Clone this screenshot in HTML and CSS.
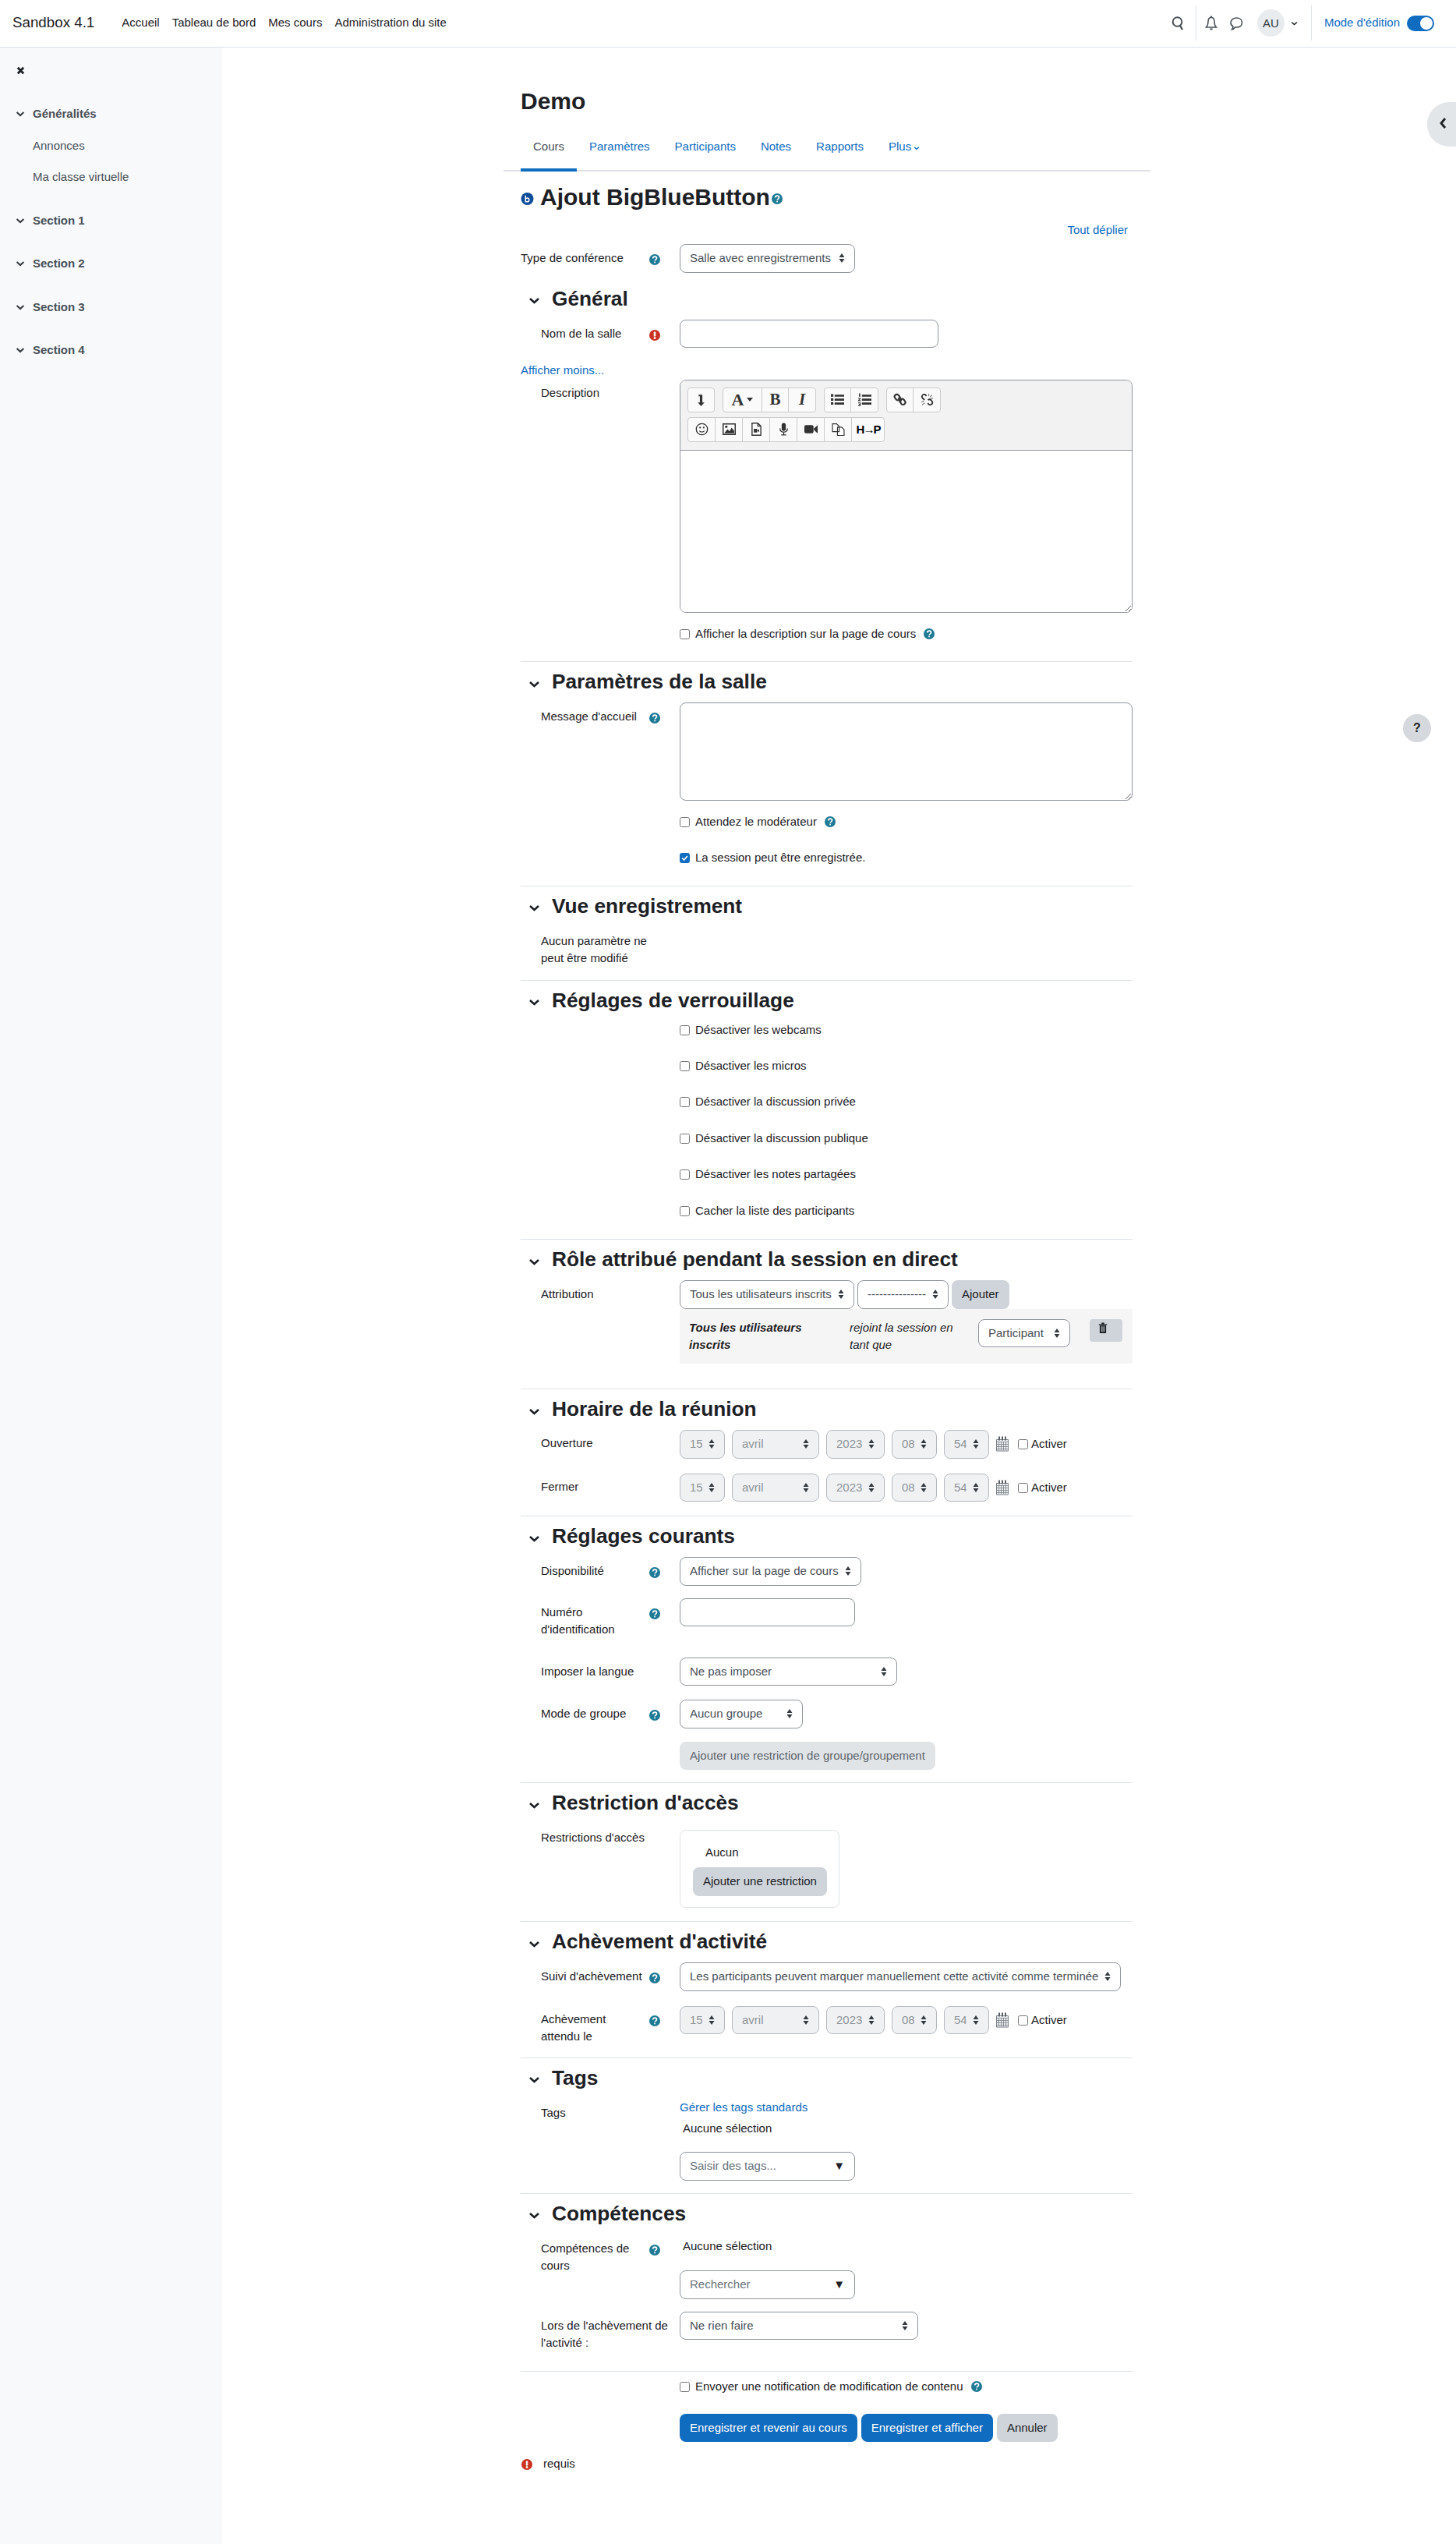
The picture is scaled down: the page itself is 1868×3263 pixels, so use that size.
FILE: index.html
```html
<!DOCTYPE html>
<html lang="fr">
<head>
    <meta charset="UTF-8">
    <meta name="viewport" content="width=device-width, initial-scale=1.0">
    <title>Ajout BigBlueButton</title>
    <link rel="stylesheet" href="styles.css">
</head>
<body>
    <svg class="defs" width="0" height="0">
        <symbol id="help" viewBox="0 0 14 14">
            <circle cx="7" cy="7" r="7" fill="#1f7a96"/>
            <path d="M4.6 5.5C4.7 3.9 5.7 3.1 7.1 3.1c1.5 0 2.4.9 2.4 2 0 1-.6 1.5-1.3 2-.6.4-.9.7-.9 1.4" fill="none" stroke="#fff" stroke-width="1.7"/>
            <rect x="6.2" y="9.6" width="1.7" height="1.7" fill="#fff"/>
        </symbol>
        <symbol id="req" viewBox="0 0 14 14">
            <circle cx="7" cy="7" r="7" fill="#ca3120"/>
            <rect x="5.7" y="2.4" width="2.6" height="6" rx=".6" fill="#fff"/>
            <rect x="5.7" y="9.3" width="2.6" height="2.4" rx=".5" fill="#fff"/>
        </symbol>
        <symbol id="chev" viewBox="0 0 15 9">
            <path d="M2 2l5.5 5L13 2" fill="none" stroke="currentColor" stroke-width="2.6"/>
        </symbol>
        <symbol id="cal" viewBox="0 0 16 20">
            <path d="M0 4h16v15.500H0z" fill="#eceef0"/>
            <path d="M1 7.500h14M1 10.500h14M1 13.500h14M1 16.500h14M3.500 7v11M6.500 7v11M9.500 7v11M12.500 7v11" stroke="#7a8087" stroke-width=".8" fill="none"/>
            <path d="M.5 4.500h15v14.500H.5z" fill="none" stroke="#7a8087"/>
            <path d="M3 .5h2v5H3zM7 .5h2v5H7zM11 .5h2v5h-2z" fill="#5a6067"/>
        </symbol>
    </svg>

    <header class="navbar">
        <a class="brand">Sandbox 4.1</a>
        <nav class="mainnav">
            <a>Accueil</a>
            <a>Tableau de bord</a>
            <a>Mes cours</a>
            <a>Administration du site</a>
        </nav>
        <div class="usernav">
            <svg class="nav-icon" viewBox="0 0 16 20"><circle cx="7.500" cy="8" r="5.800" fill="none" stroke="#495057" stroke-width="2"/><path d="M11 13l3 5" stroke="#495057" stroke-width="2.400"/></svg>
            <span class="nav-sep"></span>
            <svg class="nav-icon bell" viewBox="0 0 16 20"><path d="M8 2.500c-3 0-4 2-4 5 0 3.500-.6 5.500-2.500 7.500h13c-1.900-2-2.500-4-2.500-7.500 0-3-1-5-4-5z" fill="none" stroke="#495057" stroke-width="1.500"/><path d="M6 16.500a2 2 0 0 0 4 0zM7 .5h2v2.500H7z" fill="#495057"/></svg>
            <svg class="nav-icon chat" viewBox="0 0 18 20"><path d="M9.500 3c4 0 7 2.400 7 6s-3 6-7 6c-.6 0-1 0-1.500-.1-1.200 1.300-2.600 2.400-4.500 2.800.9-1.200 1.400-2.300 1.500-3.700C3 12.800 2 11 2 9c0-3.600 3.500-6 7.500-6z" fill="none" stroke="#495057" stroke-width="1.600"/></svg>
            <span class="avatar">AU</span>
            <svg class="nav-chev"><use href="#chev"/></svg>
            <span class="nav-sep sep-2"></span>
            <a class="edit-label">Mode d'édition</a>
            <span class="toggle"><span class="knob"></span></span>
        </div>
    </header>

    <div class="page">
        <aside class="drawer">
            <svg class="close-x" viewBox="0 0 12 12"><path d="M2 2l8 8M10 2l-8 8" stroke="#1d2125" stroke-width="3.200"/></svg>
            <div class="sec sec-first"><svg class="sec-chev"><use href="#chev"/></svg>Généralités</div>
            <a class="act act-first">Annonces</a>
            <a class="act">Ma classe virtuelle</a>
            <div class="sec sec-next"><svg class="sec-chev"><use href="#chev"/></svg>Section 1</div>
            <div class="sec"><svg class="sec-chev"><use href="#chev"/></svg>Section 2</div>
            <div class="sec"><svg class="sec-chev"><use href="#chev"/></svg>Section 3</div>
            <div class="sec"><svg class="sec-chev"><use href="#chev"/></svg>Section 4</div>
        </aside>

        <main class="region">
            <h1 class="course-title">Demo</h1>
            <nav class="tabs">
                <a class="tab active">Cours</a>
                <a class="tab">Paramètres</a>
                <a class="tab">Participants</a>
                <a class="tab">Notes</a>
                <a class="tab">Rapports</a>
                <a class="tab">Plus<svg class="plus-chev"><use href="#chev"/></svg></a>
            </nav>

            <div class="content">
                <h2 class="page-title">
                    <svg class="mod-icon" viewBox="0 0 16 16"><circle cx="8" cy="8" r="8" fill="#0f4d9a"/><path d="M5.800 3.800v8h1.700M5.800 8.200c.6-.9 1.400-1.200 2.200-1.200 1.300 0 2.300 1 2.300 2.400S9.300 11.800 8 11.800c-.9 0-1.700-.4-2.200-1.200" fill="none" stroke="#fff" stroke-width="1.500"/></svg>
                    Ajout BigBlueButton
                    <svg class="help title-help"><use href="#help"/></svg>
                </h2>
                <div class="expand-all"><a>Tout déplier</a></div>

                <div class="row">
                    <div class="lab lab-flat"><span>Type de conférence</span><span class="addon"><svg class="help"><use href="#help"/></svg></span></div>
                    <select class="w-225"><option>Salle avec enregistrements</option></select>
                </div>

                <section class="block block-first">
                    <h3 class="hd"><svg class="hd-chev"><use href="#chev"/></svg>Général</h3>
                    <div class="row row-name">
                        <div class="lab"><span>Nom de la salle</span><span class="addon"><svg class="help"><use href="#req"/></svg></span></div>
                        <input class="text w-332" type="text">
                    </div>
                    <a class="show-less">Afficher moins...</a>
                    <div class="row">
                        <div class="lab lab-date"><span>Description</span></div>
                        <div class="editor">
                            <div class="toolbar">
                                <div class="tool-row">
                                    <div class="tool-group tool-single"><button class="tool"><svg viewBox="0 0 16 16" class="ti"><path d="M5 2h4.500v9.500H12L8 16l-4-4.500h2.500V4H5z" fill="#333"/></svg></button></div>
                                    <div class="tool-group">
                                        <button class="tool tool-font">A<span class="caret"></span></button>
                                        <button class="tool tool-b">B</button>
                                        <button class="tool tool-i">I</button>
                                    </div>
                                    <div class="tool-group">
                                        <button class="tool"><svg viewBox="0 0 16 16" class="ti"><path d="M4.500 2h11.500v2.500H4.500zM4.500 6.800h11.500v2.500H4.500zM4.500 11.500h11.500v2.500H4.500zM0 1.500h3v3H0zM0 6.500h3v3H0zM0 11.200h3v3H0z" fill="#333"/></svg></button>
                                        <button class="tool"><svg viewBox="0 0 16 16" class="ti"><path d="M4.500 2h11.500v2.500H4.500zM4.500 6.800h11.500v2.500H4.500zM4.500 11.500h11.500v2.500H4.500zM1 .5h1.500v4H1zM0 6h3v1.200L1.300 8.800H3v1H0V8.700L1.700 7H0zM0 11.500h3v4.200H0v-1h2V14H1v-.8h1v-.7H0z" fill="#333"/></svg></button>
                                    </div>
                                    <div class="tool-group">
                                        <button class="tool"><svg viewBox="0 0 16 16" class="ti"><path d="M2.500 2.500a2.600 2.600 0 0 1 3.700 0l1.600 2a2.600 2.600 0 0 1-.4 3.500 2.600 2.600 0 0 1-3.700 0l-1.600-2a2.600 2.600 0 0 1 .4-3.500zM9 8a2.600 2.600 0 0 1 3.700 0l1.300 1.700a2.600 2.600 0 0 1-.4 3.600 2.600 2.600 0 0 1-3.700 0l-1.300-1.800A2.600 2.600 0 0 1 9 8zM6 6l4 4" fill="none" stroke="#333" stroke-width="2"/></svg></button>
                                        <button class="tool"><svg viewBox="0 0 16 16" class="ti"><path d="M2.500 2.500a2.600 2.600 0 0 1 3.700 0l.9 1.200M4.800 8.500L2.800 6.500a2.600 2.600 0 0 1-.4-3.800M9 8.500a2.600 2.600 0 0 1 3.700 0l1.100 1.600a2.600 2.600 0 0 1-.4 3.500 2.600 2.600 0 0 1-3.700 0l-.9-1.200" fill="none" stroke="#333" stroke-width="1.800"/><path d="M10 1v3M14 2.500l-2.500 2.500M15 6.500h-3M1 11l3-1M2 14.500l3-2.500" stroke="#777" stroke-width="1"/></svg></button>
                                    </div>
                                </div>
                                <div class="tool-row">
                                    <div class="tool-group">
                                        <button class="tool"><svg viewBox="0 0 16 16" class="ti"><circle cx="8" cy="8" r="6.800" fill="none" stroke="#333" stroke-width="1.200"/><circle cx="5.800" cy="6" r="1" fill="#333"/><circle cx="10.200" cy="6" r="1" fill="#333"/><path d="M5 10c1.600 1.800 4.400 1.800 6 0" fill="none" stroke="#333" stroke-width="1.200"/></svg></button>
                                        <button class="tool"><svg viewBox="0 0 16 16" class="ti"><path d="M.7 1.700h14.600v12.600H.7z" fill="none" stroke="#333" stroke-width="1.400"/><path d="M2 13l4-5 2.500 2.500L11 6l3 4v3z" fill="#333"/><circle cx="4.500" cy="5" r="1.500" fill="#333"/></svg></button>
                                        <button class="tool"><svg viewBox="0 0 16 16" class="ti"><path d="M2.700.7h7l3.600 3.600v11H2.700zM9.700.7v3.600h3.600" fill="none" stroke="#333" stroke-width="1.300"/><path d="M4.800 7.500h4v4.500h-4zM9 9.500l2.200-1.500v3.500L9 10.200z" fill="#333"/></svg></button>
                                        <button class="tool"><svg viewBox="0 0 16 16" class="ti"><rect x="5.500" y=".5" width="5" height="9.500" rx="2.500" fill="#333"/><path d="M3.500 7c0 3 2 4.500 4.500 4.500S12.500 10 12.500 7M8 11.500V15M5 15h6" fill="none" stroke="#333" stroke-width="1.200"/></svg></button>
                                        <button class="tool"><svg viewBox="0 0 16 16" class="ti"><rect x="0" y="3" width="11" height="10" rx="2" fill="#333"/><path d="M11.500 7L16 3v10l-4.500-4z" fill="#333"/></svg></button>
                                        <button class="tool"><svg viewBox="0 0 16 16" class="ti"><path d="M1 1.500h5l3 3V11H1zM7 5.500h5l3 3v7H7z" fill="#fff" stroke="#333" stroke-width="1.100"/></svg></button>
                                        <button class="tool tool-h5p">H→P</button>
                                    </div>
                                </div>
                            </div>
                            <textarea class="editor-body"></textarea>
                        </div>
                    </div>
                    <label class="check-row"><input type="checkbox">Afficher la description sur la page de cours<svg class="help check-help"><use href="#help"/></svg></label>
                </section>

                <section class="block">
                    <h3 class="hd"><svg class="hd-chev"><use href="#chev"/></svg>Paramètres de la salle</h3>
                    <div class="row">
                        <div class="lab"><span>Message d'accueil</span><span class="addon"><svg class="help"><use href="#help"/></svg></span></div>
                        <textarea class="welcome"></textarea>
                    </div>
                    <label class="check-row"><input type="checkbox">Attendez le modérateur<svg class="help check-help"><use href="#help"/></svg></label>
                    <label class="check-row"><input type="checkbox" checked>La session peut être enregistrée.</label>
                </section>

                <section class="block">
                    <h3 class="hd"><svg class="hd-chev"><use href="#chev"/></svg>Vue enregistrement</h3>
                    <div class="row">
                        <div class="lab"><span>Aucun paramètre ne peut être modifié</span></div>
                    </div>
                </section>

                <section class="block block-lock">
                    <h3 class="hd"><svg class="hd-chev"><use href="#chev"/></svg>Réglages de verrouillage</h3>
                    <label class="check-row"><input type="checkbox">Désactiver les webcams</label>
                    <label class="check-row"><input type="checkbox">Désactiver les micros</label>
                    <label class="check-row"><input type="checkbox">Désactiver la discussion privée</label>
                    <label class="check-row"><input type="checkbox">Désactiver la discussion publique</label>
                    <label class="check-row"><input type="checkbox">Désactiver les notes partagées</label>
                    <label class="check-row"><input type="checkbox">Cacher la liste des participants</label>
                </section>

                <section class="block">
                    <h3 class="hd"><svg class="hd-chev"><use href="#chev"/></svg>Rôle attribué pendant la session en direct</h3>
                    <div class="row row-tight">
                        <div class="lab"><span>Attribution</span></div>
                        <div class="inline">
                            <select class="w-224"><option>Tous les utilisateurs inscrits</option></select>
                            <select class="w-117"><option>---------------</option></select>
                            <button class="btn btn-grey">Ajouter</button>
                        </div>
                    </div>
                    <div class="role-panel">
                        <div class="role-who">Tous les utilisateurs inscrits</div>
                        <div class="role-join">rejoint la session en tant que</div>
                        <select class="w-118"><option>Participant</option></select>
                        <button class="trash"><svg viewBox="0 0 12 16" class="trash-icon"><path d="M0 2.500h12V4H0zM4 .5h4v2H4zM1.300 4.500h9.400V16H1.300z" fill="#1d2125"/><path d="M4 6v8M6 6v8M8 6v8" stroke="#ced4da" stroke-width="1"/></svg></button>
                    </div>
                </section>

                <section class="block">
                    <h3 class="hd"><svg class="hd-chev"><use href="#chev"/></svg>Horaire de la réunion</h3>
                    <div class="row row-date row-open">
                        <div class="lab lab-date"><span>Ouverture</span></div>
                        <div class="inline date">
                            <select class="w-58" disabled><option>15</option></select>
                            <select class="w-112" disabled><option>avril</option></select>
                            <select class="w-75" disabled><option>2023</option></select>
                            <select class="w-58" disabled><option>08</option></select>
                            <select class="w-58" disabled><option>54</option></select>
                            <svg class="cal"><use href="#cal"/></svg>
                            <label class="enable"><input type="checkbox">Activer</label>
                        </div>
                    </div>
                    <div class="row row-18">
                        <div class="lab lab-date"><span>Fermer</span></div>
                        <div class="inline date">
                            <select class="w-58" disabled><option>15</option></select>
                            <select class="w-112" disabled><option>avril</option></select>
                            <select class="w-75" disabled><option>2023</option></select>
                            <select class="w-58" disabled><option>08</option></select>
                            <select class="w-58" disabled><option>54</option></select>
                            <svg class="cal"><use href="#cal"/></svg>
                            <label class="enable"><input type="checkbox">Activer</label>
                        </div>
                    </div>
                </section>

                <section class="block">
                    <h3 class="hd"><svg class="hd-chev"><use href="#chev"/></svg>Réglages courants</h3>
                    <div class="row">
                        <div class="lab"><span>Disponibilité</span><span class="addon"><svg class="help"><use href="#help"/></svg></span></div>
                        <select class="w-233"><option>Afficher sur la page de cours</option></select>
                    </div>
                    <div class="row row-idnumber">
                        <div class="lab"><span>Numéro d'identification</span><span class="addon"><svg class="help"><use href="#help"/></svg></span></div>
                        <input class="text w-225" type="text">
                    </div>
                    <div class="row row-18">
                        <div class="lab"><span>Imposer la langue</span></div>
                        <select class="w-279"><option>Ne pas imposer</option></select>
                    </div>
                    <div class="row row-17">
                        <div class="lab"><span>Mode de groupe</span><span class="addon"><svg class="help"><use href="#help"/></svg></span></div>
                        <select class="w-158"><option>Aucun groupe</option></select>
                    </div>
                    <div class="row">
                        <div class="lab"></div>
                        <button class="btn btn-disabled" disabled>Ajouter une restriction de groupe/groupement</button>
                    </div>
                </section>

                <section class="block">
                    <h3 class="hd"><svg class="hd-chev"><use href="#chev"/></svg>Restriction d'accès</h3>
                    <div class="row row-17">
                        <div class="lab"><span>Restrictions d'accès</span></div>
                        <div class="avail">
                            <div class="avail-none">Aucun</div>
                            <button class="btn btn-grey">Ajouter une restriction</button>
                        </div>
                    </div>
                </section>

                <section class="block">
                    <h3 class="hd"><svg class="hd-chev"><use href="#chev"/></svg>Achèvement d'activité</h3>
                    <div class="row row-date">
                        <div class="lab"><span>Suivi d'achèvement</span><span class="addon"><svg class="help"><use href="#help"/></svg></span></div>
                        <select class="w-566"><option>Les participants peuvent marquer manuellement cette activité comme terminée</option></select>
                    </div>
                    <div class="row row-15">
                        <div class="lab lab-date"><span>Achèvement attendu le</span><span class="addon"><svg class="help"><use href="#help"/></svg></span></div>
                        <div class="inline date">
                            <select class="w-58" disabled><option>15</option></select>
                            <select class="w-112" disabled><option>avril</option></select>
                            <select class="w-75" disabled><option>2023</option></select>
                            <select class="w-58" disabled><option>08</option></select>
                            <select class="w-58" disabled><option>54</option></select>
                            <svg class="cal"><use href="#cal"/></svg>
                            <label class="enable"><input type="checkbox">Activer</label>
                        </div>
                    </div>
                </section>

                <section class="block">
                    <h3 class="hd"><svg class="hd-chev"><use href="#chev"/></svg>Tags</h3>
                    <div class="row">
                        <div class="lab"><span>Tags</span></div>
                        <div class="stack">
                            <a class="manage">Gérer les tags standards</a>
                            <div class="none-sel">Aucune sélection</div>
                            <div class="picker"><span>Saisir des tags...</span><span class="picker-arrow">▼</span></div>
                        </div>
                    </div>
                </section>

                <section class="block">
                    <h3 class="hd"><svg class="hd-chev"><use href="#chev"/></svg>Compétences</h3>
                    <div class="row">
                        <div class="lab"><span>Compétences de cours</span><span class="addon"><svg class="help"><use href="#help"/></svg></span></div>
                        <div class="stack stack-comp">
                            <div class="none-sel">Aucune sélection</div>
                            <div class="picker"><span>Rechercher</span><span class="picker-arrow">▼</span></div>
                        </div>
                    </div>
                    <div class="row row-last">
                        <div class="lab"><span>Lors de l'achèvement de l'activité :</span></div>
                        <select class="w-306"><option>Ne rien faire</option></select>
                    </div>
                </section>

                <section class="block block-foot">
                    <label class="check-row"><input type="checkbox">Envoyer une notification de modification de contenu<svg class="help check-help"><use href="#help"/></svg></label>
                    <div class="actions">
                        <button class="btn btn-primary">Enregistrer et revenir au cours</button>
                        <button class="btn btn-primary">Enregistrer et afficher</button>
                        <button class="btn btn-grey">Annuler</button>
                    </div>
                    <div class="required"><svg class="help"><use href="#req"/></svg>requis</div>
                </section>
            </div>
        </main>
    </div>

    <div class="right-toggle"><svg viewBox="0 0 10 16" class="right-chev"><path d="M8 2L3 8l5 6" fill="none" stroke="#1d2125" stroke-width="2.800"/></svg></div>
    <div class="help-float">?</div>
</body>
</html>
```

FILE: styles.css
```css
* { box-sizing: border-box; }
html, body { margin: 0; }
body {
    position: relative;
    min-height: 3263px;
    font-family: "Liberation Sans", Arial, sans-serif;
    font-size: 15px;
    line-height: 22.5px;
    color: #1d2125;
    background: #fff;
}
a { color: #0f6cbf; text-decoration: none; }
.defs { position: absolute; }

/* top bar */
.navbar {
    display: flex;
    align-items: center;
    height: 61px;
    padding: 0 28px 1px 16px;
    border-bottom: 1px solid #dee2e6;
}
.brand { font-size: 18.75px; color: #1d2125; margin-right: 35px; }
.mainnav { display: flex; gap: 16px; }
.mainnav a { color: #1d2125; }
.usernav { display: flex; align-items: center; margin-left: auto; }
.nav-icon { width: 16px; height: 20px; }
.nav-sep { width: 1px; height: 45px; background: #dee2e6; margin: 0 11px 0 15px; }
.bell { margin-right: 15px; }
.chat { width: 18px; margin-right: 18px; }
.avatar {
    width: 35px;
    height: 35px;
    border-radius: 50%;
    background: #e9ecef;
    text-align: center;
    line-height: 35px;
    color: #343a40;
}
.nav-chev { width: 9px; height: 6px; margin-left: 8px; color: #1d2125; }
.sep-2 { margin: 0 16px 0 17px; }
.toggle {
    position: relative;
    width: 35px;
    height: 20px;
    margin-left: 9px;
    border-radius: 10px;
    background: #0f6cbf;
}
.knob {
    position: absolute;
    right: 2px;
    top: 2px;
    width: 16px;
    height: 16px;
    border-radius: 50%;
    background: #fff;
}

/* left drawer */
.page { display: flex; }
.drawer {
    flex: 0 0 285px;
    min-height: 3202px;
    padding: 24px 21px;
    background: #f8f9fa;
    color: #495057;
}
.close-x { display: block; width: 11px; height: 11px; }
.sec {
    display: flex;
    align-items: center;
    height: 22.5px;
    margin-top: 33px;
    font-weight: 700;
}
.sec-first { margin-top: 39px; }
.sec-next { margin-top: 33px; }
.sec-chev { width: 12px; height: 8px; margin-right: 10px; margin-left: -1px; color: #343a40; }
.act { display: block; margin: 17.500px 0 0 21px; color: #495057; }
.act-first { margin-top: 18.500px; }

/* main column */
.region { width: 830px; margin-left: 361px; padding-top: 51px; }
.course-title { margin: 0; padding-left: 22px; font-size: 30px; line-height: 36px; }
.tabs {
    display: flex;
    height: 61px;
    margin-top: 11px;
    padding: 13px 0 0 22px;
    border-bottom: 2px solid #dee2e6;
}
.tab { position: relative; padding: 5px 16px; height: 48px; }
.tab.active { color: #495057; }
.tab.active::after {
    content: "";
    position: absolute;
    left: 0;
    right: 0;
    top: 44px;
    height: 4px;
    background: #0f6cbf;
}
.plus-chev { width: 8px; height: 6px; margin-left: 3px; color: #0f6cbf; }
.content { padding: 0 23px 0 22px; }
.page-title {
    display: flex;
    align-items: center;
    margin: 15px 0 0;
    font-size: 30px;
    line-height: 36px;
}
.mod-icon { width: 17px; height: 16px; margin: 4px 8px 0 0; }
.help { width: 14px; height: 14px; flex: none; }
.title-help { margin: 4px 0 0 2px; }
.expand-all { text-align: right; margin-top: 13px; height: 23px; padding-right: 6px; }

/* form rows */
.row { display: flex; align-items: flex-start; margin-bottom: 16px; }
.row > .lab + * { flex: none; }
.expand-all + .row { margin-top: 6px; }
.lab {
    display: flex;
    flex: 0 0 204px;
    padding: 7px 14px 0 26px;
}
.lab > span:first-child { flex: 1; }
.lab-flat { padding-left: 0; }
.lab-date { padding-top: 6px; }
.addon { flex: 0 0 25px; margin-left: 8px; padding-top: 4px; }
.row-name { margin-bottom: 18px; }
.row-tight { margin-bottom: 0; }
.row-date { margin-bottom: 19px; }
.row-open { margin-top: 1px; }
.row-18 { margin-bottom: 18px; }
.row-17 { margin-bottom: 17px; }
.row-15 { margin-bottom: 15px; }
.row-idnumber { margin-bottom: 24px; }
.row-last { margin-bottom: 24px; }
.show-less { display: block; height: 22.5px; }

select, .text, .picker {
    height: 36.500px;
    border: 1px solid #8f959e;
    border-radius: 8px;
    background-color: #fff;
    font: inherit;
    color: #495057;
}
select {
    appearance: none;
    padding: 0 28px 0 12px;
    background-image: url("data:image/svg+xml,%3Csvg xmlns='http://www.w3.org/2000/svg' width='8' height='14'%3E%3Cpath d='M4 1l3.500 5h-7zM4 13l-3.500-5h7z' fill='%23343a40'/%3E%3C/svg%3E");
    background-repeat: no-repeat;
    background-position: right 12px center;
}
select:disabled { background-color: #eff1f3; color: #8e9499; border-color: #b5b9bf; opacity: 1; }
.text { padding: 0 12px; }
.w-58 { width: 58px; }
.w-75 { width: 75px; }
.w-112 { width: 112px; }
.w-117 { width: 117px; }
.w-118 { width: 118px; }
.w-158 { width: 158px; }
.w-224 { width: 224px; }
.w-225 { width: 225px; }
.w-233 { width: 233px; }
.w-279 { width: 279px; }
.w-306 { width: 306px; }
.w-332 { width: 332px; }
.w-566 { width: 566px; }
.inline { display: flex; align-items: center; gap: 4px; }
.date { gap: 9px; }

/* sections */
.block { padding-top: 10px; border-top: 1px solid #dee2e6; }
.block-first { padding-top: 2px; border-top: 0; }
.block-lock { padding-bottom: 1px; }
.hd {
    display: flex;
    align-items: center;
    margin: 0 0 10.500px;
    padding-left: 10px;
    font-size: 26.250px;
    line-height: 31.500px;
}
.hd-chev { width: 15px; height: 9px; margin: 5px 15px 0 0; color: #1d2125; }

/* editor */
.editor {
    width: 581px;
    border: 1px solid #8f959e;
    border-radius: 8px;
    overflow: hidden;
}
.toolbar {
    height: 90px;
    padding: 9px 9px 0;
    background: #f2f2f2;
    border-bottom: 1px solid #8f959e;
}
.tool-row { display: flex; gap: 10px; margin-bottom: 6px; }
.tool-group {
    display: flex;
    height: 32px;
    border: 1px solid #ccc;
    border-radius: 4px;
    background: #fafafa;
}
.tool {
    display: flex;
    align-items: center;
    justify-content: center;
    width: 34px;
    padding: 0;
    border: 0;
    border-right: 1px solid #ccc;
    background: none;
    font-family: "Liberation Serif", serif;
    color: #333;
}
.tool:last-child { border-right: 0; }
.tool-single .tool { width: 33px; }
.tool-row + .tool-row .tool { width: 35px; }
.ti { width: 17px; height: 17px; }
.tool-font { width: 50px; font-size: 22px; font-weight: 700; }
.tool-b { font-size: 21px; font-weight: 700; }
.tool-i { font-size: 21px; font-style: italic; font-weight: 700; }
.caret {
    margin-left: 4px;
    border: 4.500px solid transparent;
    border-top: 5px solid #333;
    border-bottom: 0;
}
.tool-row + .tool-row .tool-h5p {
    width: 41px;
    font: 700 15px "Liberation Sans", sans-serif;
    letter-spacing: -2px;
    color: #000;
}
.editor-body { display: block; width: 100%; height: 207px; border: 0; outline: 0; background: #fff; }
.welcome { width: 581px; height: 126px; border: 1px solid #8f959e; border-radius: 8px; }

/* checkbox rows */
.check-row {
    display: flex;
    align-items: flex-start;
    min-height: 30.400px;
    margin: 0 0 16px 204px;
}
.check-row input, .enable input {
    appearance: none;
    flex: none;
    width: 13px;
    height: 13px;
    margin: 5px 7px 0 0;
    border: 1px solid #767676;
    border-radius: 2.500px;
    background: #fff;
}
.check-row input:checked {
    border-color: #0f6cbf;
    background: #0f6cbf url("data:image/svg+xml,%3Csvg xmlns='http://www.w3.org/2000/svg' viewBox='0 0 13 13'%3E%3Cpath d='M2.500 6.500l3 3 5-6' fill='none' stroke='%23fff' stroke-width='2'/%3E%3C/svg%3E");
}
.check-help { margin: 4px 0 0 10px; }

/* role assignment */
.btn {
    height: 36.500px;
    padding: 0 13px;
    border: 0;
    border-radius: 8px;
    font: inherit;
    color: #1d2125;
    white-space: nowrap;
}
.btn-grey { background: #ced4da; }
.btn-primary { background: #0f6cbf; color: #fff; }
.btn-disabled { background: #e1e4e7; color: #60676e; }
.role-panel {
    display: flex;
    align-items: flex-start;
    height: 70px;
    margin: 0 0 32.500px 204px;
    padding: 13px 0 0 12px;
    background: #f5f5f5;
    font-style: italic;
}
.role-who { flex: 0 0 206px; padding-right: 30px; font-weight: 700; }
.role-join { flex: 0 0 165px; padding-right: 8px; }
.role-panel select { font-style: normal; }
.trash {
    width: 42px;
    height: 29px;
    margin-left: 25px;
    padding: 0 0 4px 0;
    border: 0;
    border-radius: 4px;
    background: #ced4da;
    text-align: left;
}
.trash-icon { width: 12px; height: 14px; margin-left: 11px; }

/* dates */
.cal { width: 16px; height: 20px; }
.enable { display: flex; align-items: center; margin-left: 3px; }
.enable input { margin: 1px 4px 0 0; }

/* availability */
.avail {
    width: 205px;
    height: 100px;
    margin-top: 8px;
    padding: 17px 16px 0;
    border: 1px solid #dee2e6;
    border-radius: 8px;
}
.avail-none { height: 30px; padding-left: 16px; }

/* tags and competencies */
.stack { display: flex; flex-direction: column; align-items: flex-start; }
.none-sel { margin: 5px 0 18.500px 4px; }
.stack-comp .none-sel { margin-top: 4px; margin-bottom: 20px; }
.picker {
    display: flex;
    align-items: center;
    justify-content: space-between;
    width: 225px;
    padding: 0 12px;
    color: #6a737b;
}
.picker-arrow { color: #1d2125; font-size: 15px; }

/* footer of the form */
.block-foot { padding-top: 8px; }
.actions { display: flex; gap: 5px; margin: 3px 0 0 204px; }
.required { display: flex; align-items: center; margin-top: 17px; padding-left: 1px; }
.required .help { margin-right: 14px; }

/* things lying over the page */
.right-toggle {
    position: absolute;
    top: 131px;
    right: 0;
    width: 37px;
    height: 57px;
    border-radius: 28px 0 0 28px;
    background: #e3e6e9;
}
.right-chev { position: absolute; left: 15px; top: 19px; width: 10px; height: 16px; }
.help-float {
    position: absolute;
    top: 916px;
    left: 1800px;
    width: 36px;
    height: 36px;
    border-radius: 50%;
    background: #d5d8dc;
    text-align: center;
    line-height: 36px;
    font-weight: 700;
    font-size: 16px;
}
```
